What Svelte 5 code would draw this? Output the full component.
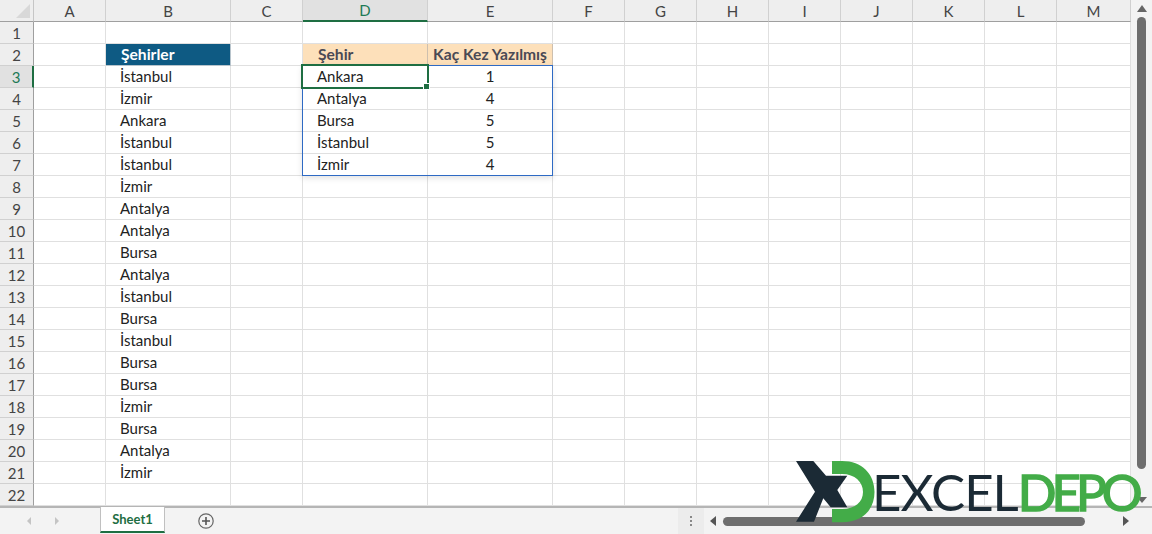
<script>
  const colWidths = [72, 125, 72, 125, 125, 72, 72, 72, 72, 72, 72, 72, 74];
  const letters = 'ABCDEFGHIJKLM'.split('');
  const rows = Array.from({ length: 22 }, (_, i) => i + 1);

  // col index -> row number -> text
  const cities = ['İstanbul', 'İzmir', 'Ankara', 'İstanbul', 'İstanbul', 'İzmir', 'Antalya', 'Antalya', 'Bursa', 'Antalya', 'İstanbul', 'Bursa', 'İstanbul', 'Bursa', 'Bursa', 'İzmir', 'Bursa', 'Antalya', 'İzmir'];
  const summary = [['Ankara', 1], ['Antalya', 4], ['Bursa', 5], ['İstanbul', 5], ['İzmir', 4]];

  function cell(col, row) {
    if (col === 'B' && row === 2) return { text: 'Şehirler', cls: 'head-blue' };
    if (col === 'B' && row >= 3 && row <= 21) return { text: cities[row - 3], cls: 'indent' };
    if (col === 'D' && row === 2) return { text: 'Şehir', cls: 'head-tan' };
    if (col === 'E' && row === 2) return { text: 'Kaç Kez Yazılmış', cls: 'head-tan center' };
    if (col === 'D' && row >= 3 && row <= 7) return { text: summary[row - 3][0], cls: 'indent' };
    if (col === 'E' && row >= 3 && row <= 7) return { text: summary[row - 3][1], cls: 'center' };
    return { text: '', cls: '' };
  }
</script>

<div class="excel">
  <div class="main">
    <div class="grid" style="grid-template-columns: 34px {colWidths.map((w) => w + 'px').join(' ')}">
      <div class="corner"><span class="tri"></span></div>
      {#each letters as l}
        <div class="col-head" class:active={l === 'D'}>{l}</div>
      {/each}
      {#each rows as r}
        <div class="row-head" class:active={r === 3}>{r}</div>
        {#each letters as l}
          {@const c = cell(l, r)}
          <div class="cell {c.cls}">{c.text}</div>
        {/each}
      {/each}

      <div class="range"></div>
      <div class="selected"><span class="handle"></span></div>
    </div>

    <div class="vscroll">
      <span class="arrow up"></span>
      <div class="vthumb"></div>
      <span class="arrow down"></span>
    </div>
  </div>

  <div class="bottom">
    <div class="nav">
      <span class="nav-arrow left"></span>
      <span class="nav-arrow right"></span>
    </div>
    <div class="tab">Sheet1</div>
    <svg class="add" width="16" height="16" viewBox="0 0 16 16">
      <circle cx="8" cy="8" r="7.2" fill="none" stroke="#666" stroke-width="1.2" />
      <path d="M8 4v8M4 8h8" stroke="#555" stroke-width="1.6" />
    </svg>
    <div class="dots"><i></i><i></i><i></i></div>
    <div class="hscroll">
      <span class="arrow left"></span>
      <div class="htrack"><div class="hthumb"></div></div>
      <span class="arrow right"></span>
    </div>
  </div>

  <div class="logo">
    <svg width="80" height="62" viewBox="0 0 80 62">
      <path d="M0 0H17.3L30 14.7H51.3L41.3 29L51.3 46.3H34.7L27.3 37.3L18 60.7H0L19 30.7Z" fill="#1b2a35" />
      <path d="M36 0H46C66 0 78.5 13 78.5 31C78.5 49 66 61.3 46 61.3H36V48H46C59 48 67 41 67 31C67 21 59 13 46 13H36Z" fill="#43ac48" />
    </svg>
    <span class="word"><span class="dark">EXCEL</span><span class="green">DEPO</span></span>
  </div>
</div>

<style>
  :global(body) {
    margin: 0;
    background: #fff;
  }

  .excel {
    position: relative;
    width: 1152px;
    height: 534px;
    overflow: hidden;
    display: flex;
    flex-direction: column;
    font-family: Lato, "Liberation Sans", sans-serif;
    font-size: 15px;
    color: #222;
  }

  .main {
    display: flex;
    height: 506px;
  }

  .grid {
    position: relative;
    display: grid;
    grid-template-rows: 22px repeat(22, 22px);
    width: 1131px;
    border-right: 1px solid #b5b5b5;
    box-sizing: border-box;
  }

  .corner,
  .col-head,
  .row-head {
    background: #eeeeee;
    color: #444;
    box-sizing: border-box;
    display: flex;
    align-items: center;
    justify-content: center;
    font-size: 15px;
  }

  .corner {
    position: relative;
    border-right: 1px solid #c6c6c6;
    border-bottom: 1px solid #9f9f9f;
  }

  .tri {
    position: absolute;
    right: 3px;
    bottom: 3px;
    width: 0;
    height: 0;
    border-left: 14px solid transparent;
    border-bottom: 14px solid #d8d8d8;
  }

  .col-head {
    border-right: 1px solid #d0d0d0;
    border-bottom: 1px solid #9f9f9f;
  }

  .col-head.active {
    background: #e1e1e1;
    color: #1d7a55;
    border-bottom: 2px solid #1e6e42;
  }

  .row-head {
    border-right: 1px solid #9f9f9f;
    border-bottom: 1px solid #d0d0d0;
  }

  .row-head.active {
    background: #e1e1e1;
    color: #1d7a55;
    border-right: 2px solid #1e6e42;
  }

  .cell {
    box-sizing: border-box;
    border-right: 1px solid #e0e0e0;
    border-bottom: 1px solid #e0e0e0;
    display: flex;
    align-items: center;
    padding-bottom: 2px;
    white-space: nowrap;
    overflow: hidden;
    background: #fff;
  }

  .indent {
    padding-left: 14px;
  }

  .center {
    justify-content: center;
  }

  .head-blue {
    background: #0e5a83;
    color: #fff;
    font-weight: 700;
    font-size: 15.6px;
    padding-left: 15px;
    border-color: #b8c4cc;
  }

  .head-tan {
    background: #fde0ba;
    color: #4a4a55;
    font-weight: 700;
    font-size: 15.6px;
    padding-left: 15px;
    border-color: #cdbfae;
  }

  .head-tan.center {
    padding-left: 0;
  }

  .range {
    position: absolute;
    left: 302px;
    top: 65px;
    width: 251px;
    height: 111px;
    box-sizing: border-box;
    border: 1px solid #2e6ac4;
    box-shadow: 0 2px 6px rgba(0, 0, 0, 0.12);
    pointer-events: none;
  }

  .selected {
    position: absolute;
    left: 301px;
    top: 64px;
    width: 128px;
    height: 25px;
    box-sizing: border-box;
    border: 2px solid #1e6e42;
    pointer-events: none;
  }

  .handle {
    position: absolute;
    right: -3px;
    bottom: -3px;
    width: 5px;
    height: 5px;
    background: #1e6e42;
    border: 1px solid #fff;
  }

  .vscroll {
    flex: 1;
    background: #f3f3f3;
    position: relative;
    display: flex;
    flex-direction: column;
    align-items: center;
  }

  .vthumb {
    width: 9px;
    height: 452px;
    margin-top: 5px;
    background: #6e6e6e;
    border-radius: 5px;
  }

  .arrow {
    display: block;
    width: 0;
    height: 0;
  }

  .arrow.up {
    margin-top: 5px;
    border-left: 5px solid transparent;
    border-right: 5px solid transparent;
    border-bottom: 7px solid #666;
  }

  .arrow.down {
    margin-top: 28px;
    border-left: 5px solid transparent;
    border-right: 5px solid transparent;
    border-top: 6px solid #666;
  }

  .bottom {
    height: 28px;
    box-sizing: border-box;
    border-top: 2px solid #b5b5b5;
    background: #f3f3f3;
    display: flex;
    align-items: center;
    position: relative;
  }

  .nav {
    width: 100px;
    display: flex;
    gap: 24px;
    padding-left: 27px;
    box-sizing: border-box;
  }

  .nav-arrow {
    width: 0;
    height: 0;
    border-top: 4px solid transparent;
    border-bottom: 4px solid transparent;
  }

  .nav-arrow.left {
    border-right: 4px solid #c4c4c4;
  }

  .nav-arrow.right {
    border-left: 4px solid #c4c4c4;
  }

  .tab {
    width: 65px;
    height: 26px;
    margin-top: -2px;
    box-sizing: border-box;
    background: #fff;
    border-left: 1px solid #c0c0c0;
    border-right: 1px solid #c0c0c0;
    border-bottom: 2px solid #1e6e42;
    color: #1e6e42;
    font-weight: 700;
    font-size: 13px;
    display: flex;
    align-items: center;
    justify-content: center;
  }

  .add {
    margin-left: 33px;
  }

  .dots {
    position: absolute;
    left: 678px;
    top: 0;
    bottom: 0;
    width: 26px;
    background: #ececec;
    display: flex;
    flex-direction: column;
    align-items: center;
    justify-content: center;
    gap: 2px;
  }

  .dots i {
    width: 2px;
    height: 2px;
    background: #888;
  }

  .hscroll {
    margin-left: auto;
    width: 442px;
    display: flex;
    align-items: center;
    padding-right: 23px;
    box-sizing: border-box;
  }

  .arrow.left {
    border-top: 5px solid transparent;
    border-bottom: 5px solid transparent;
    border-right: 6px solid #555;
  }

  .arrow.right {
    border-top: 5px solid transparent;
    border-bottom: 5px solid transparent;
    border-left: 6px solid #555;
  }

  .htrack {
    flex: 1;
    margin: 0 7px;
  }

  .hthumb {
    width: 362px;
    height: 9px;
    background: #6e6e6e;
    border-radius: 5px;
  }

  .logo {
    position: absolute;
    left: 796px;
    top: 461px;
    display: flex;
    align-items: center;
    pointer-events: none;
  }

  .word {
    margin-left: -4px;
    margin-top: -1px;
    font-family: Lato, sans-serif;
    font-size: 51px;
    line-height: 62px;
    white-space: nowrap;
  }

  .dark {
    color: #1b2a35;
    letter-spacing: -1px;
  }

  .green {
    color: #43ac48;
    font-weight: 400;
    letter-spacing: -5px;
    -webkit-text-stroke: 1.5px #43ac48;
  }
</style>
